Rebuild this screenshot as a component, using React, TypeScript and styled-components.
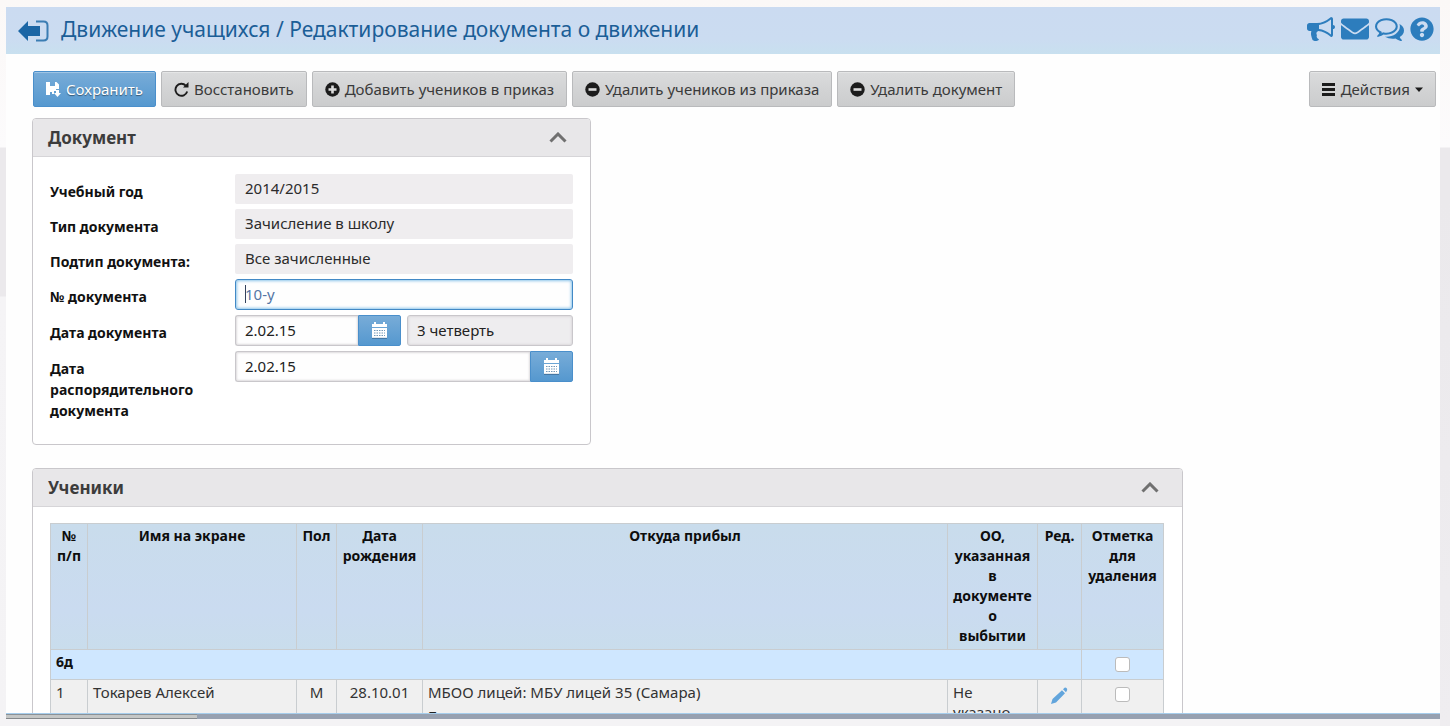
import React from "react";
import styled, { createGlobalStyle, css } from "styled-components";
import { FaEnvelope, FaQuestionCircle } from "react-icons/fa";

const GlobalStyle = createGlobalStyle`
  *, *::before, *::after { box-sizing: border-box; }
  body {
    margin: 0;
    background:
      linear-gradient(transparent 150px, #ebe9ec 200px, #efedf0 100%) right / 10px 100% no-repeat,
      linear-gradient(#fbf8f7 0, #fcfbfc 147px, #ebe9ec 148px, #ebe9ec 296px, #f5f4f6 297px, #f4f3f5 100%);
    font-family: "Noto Sans", "Open Sans", sans-serif;
    font-size: 15px;
    line-height: 20px;
    color: #222;
  }
  button, input { font: inherit; color: inherit; }
`;

const Frame = styled.div`
  height: 100vh;
  padding: 7px 10px 7px 6px;
  display: flex;
  flex-direction: column;
`;

const Header = styled.header`
  flex: none;
  height: 47px;
  padding: 0 6px 0 12px;
  display: flex;
  align-items: center;
  background: linear-gradient(#cbdbf1 0%, #cbdcf1 70%, #c8e0ef 100%);
  color: #1b5e97;
`;

const Title = styled.h1`
  flex: 1;
  margin: 0 0 4px 11px;
  font-size: 21px;
  line-height: 30px;
  font-weight: 400;
  white-space: nowrap;
`;

const BackLink = styled.a`
  display: flex;
  color: #1b66a5;
`;

const HeaderLinks = styled.nav`
  display: flex;
  align-items: center;
  gap: 6px;
  margin-bottom: 4px;
  a { display: flex; color: #2d7dbd; }
`;

const Content = styled.main`
  flex: 1;
  min-height: 0;
  overflow: hidden;
  background: #fefefe;
  padding: 17px 4px 0 26px;
`;

const Toolbar = styled.div`
  display: flex;
  gap: 5px;
  margin-bottom: 11px;
  padding-left: 1px;
`;

const blue = css`
  background: linear-gradient(#78acd8, #5598cf);
  border: 1px solid #4a8fcb;
  color: #fff;
`;

const ToolButton = styled.button<{ $primary?: boolean; $end?: boolean }>`
  height: 36px;
  padding: 0 12px;
  display: flex;
  align-items: center;
  gap: 5px;
  white-space: nowrap;
  border-radius: 2px;
  background: linear-gradient(#dadbdc, #cbcccd);
  border: 1px solid #b9babc;
  box-shadow: inset 0 1px 0 rgba(255, 255, 255, 0.3);
  color: #3a3a3a;
  ${(p) => p.$primary && blue}
  ${(p) => p.$primary && "text-shadow: 0 1px 1px rgba(0, 0, 0, 0.45);"}
  ${(p) => p.$end && "margin-left: auto;"}
  svg { color: ${(p) => (p.$primary ? "#fff" : "#1c1c1c")}; }
`;

const Panel = styled.section<{ $wide?: boolean }>`
  max-width: ${(p) => (p.$wide ? 1151 : 559)}px;
  margin-bottom: 23px;
  border: 1px solid #c9c7cb;
  border-radius: 4px;
  background: #fff;
`;

const PanelHead = styled.div`
  height: 38px;
  padding: 0 23px 0 15px;
  display: flex;
  align-items: center;
  justify-content: space-between;
  background: #e8e7e9;
  border-bottom: 1px solid #d6d5d8;
  border-radius: 3px 3px 0 0;
`;

const PanelTitle = styled.h2`
  margin: 0;
  font-size: 17px;
  line-height: 22px;
  font-weight: 700;
  color: #3c3c3c;
`;

const IconButton = styled.button`
  display: inline-flex;
  padding: 0;
  border: 0;
  background: none;
  color: #707070;
`;

const Form = styled.form`
  padding: 17px 17px 23px;
  display: grid;
  row-gap: 5px;
`;

const Row = styled.div`
  display: grid;
  grid-template-columns: 160px 1fr;
  column-gap: 25px;
  align-items: start;
`;

const Label = styled.label`
  height: 30px;
  padding-top: 7px;
  font-size: 14px;
  line-height: 21px;
  font-weight: 700;
  color: #111;
`;

const TallLabel = styled(Label)`
  height: auto;
`;

const Fields = styled.div<{ $split?: boolean }>`
  display: grid;
  grid-template-columns: ${(p) => (p.$split ? "1fr 1fr" : "1fr")};
  gap: 6px;
`;

const ReadOnly = styled.input`
  width: 100%;
  min-width: 0;
  height: 30px;
  padding: 0 10px 2px;
  border: 0;
  border-radius: 2px;
  background: #efedef;
  color: #2b2b2b;
  outline: none;
`;

const TextInput = styled.input<{ $active?: boolean; $muted?: boolean }>`
  flex: 1;
  width: 100%;
  min-width: 0;
  height: 31px;
  padding: 0 9px 2px;
  border: 1px solid #c9c7cb;
  border-radius: 3px;
  background: ${(p) => (p.$muted ? "#eeedef" : "#fefefe")};
  box-shadow: inset 0 0 2px 1px #dddbde;
  color: #222;
  outline: none;
  ${(p) =>
    p.$active &&
    css`
      border-color: #4289c6;
      box-shadow: inset 0 0 3px 1px #8cc4ea;
      color: #5576a5;
      background: linear-gradient(#33425c, #33425c) 9px 5px / 1px 18px no-repeat #fefefe;
    `}
`;

const DateGroup = styled.div`
  display: flex;
  min-width: 0;
  input { border-radius: 3px 0 0 3px; border-right: 0; }
`;

const DateButton = styled.button`
  flex: none;
  width: 43px;
  height: 31px;
  padding: 0;
  display: flex;
  align-items: center;
  justify-content: center;
  border-radius: 0 2px 2px 0;
  ${blue}
`;

const TableWrap = styled.div`
  padding: 16px 18px 0 17px;
`;

const Table = styled.table`
  width: 100%;
  table-layout: fixed;
  border-collapse: collapse;
  line-height: 20px;
  th, td {
    border: 1px solid #c9cdd0;
    vertical-align: top;
    text-align: left;
  }
`;

const HeadRow = styled.tr`
  background: linear-gradient(#c9dcec, #cadbf0 70%, #c9ddec);
  && th {
    padding: 2px 4px 3px;
    text-align: center;
    font-size: 14px;
    white-space: pre-line;
    color: #0d0d0d;
  }
`;

const GroupRow = styled.tr`
  height: 30px;
  background: #cfe7ff;
  th { padding: 2px 5px; color: #111; font-size: 14px; }
`;

const DataRow = styled.tr`
  background: #f0f0f0;
  color: #333;
`;

const Cell = styled.td<{ $center?: boolean }>`
  && {
    padding: ${(p) => (p.$center ? "2px 5px" : "2px 7px 2px 5px")};
    text-align: ${(p) => (p.$center ? "center" : "left")};
  }
`;

const Note = styled.b`
  display: block;
  margin-top: 4px;
  color: #222;
`;

const EditLink = styled.a`
  display: inline-flex;
  margin-top: 5px;
  color: #62a5dc;
`;

const Check = styled.input`
  appearance: none;
  display: inline-block;
  width: 15px;
  height: 15px;
  margin: 5px 0 0;
  border: 1px solid #bbb;
  border-radius: 3px;
  background: #fff;
`;

const ScrollStrip = styled.div`
  flex: none;
  height: 6px;
  display: flex;
  border-top: 1px solid #a6cdec;
  background: #97a1b1;
`;

const ScrollThumb = styled.div`
  width: 191px;
  background: #c5c7c6;
  border-top: 1px solid #8b9298;
  border-bottom: 1px solid #85898c;
`;

const BackIcon = () => (
  <svg width="32" height="22" viewBox="0 0 32 22" aria-hidden="true">
    <path d="M0 11 10 1v5h12v10H10v5z" fill="currentColor" />
    <path d="M18 1.500h7.500q4 0 4 4v11q0 4-4 4H18" fill="none" stroke="#3b7db3" strokeWidth="2" />
  </svg>
);

const BullhornIcon = () => (
  <svg width="28" height="28" viewBox="0 0 1792 1792" fill="currentColor" aria-hidden="true">
    <path
      transform="translate(0 1536) scale(1 -1)"
      d="M1664 896q53 0 90.500 -37.500t37.500 -90.500t-37.500 -90.500t-90.500 -37.500v-384q0 -52 -38 -90t-90 -38q-417 347 -812 380q-58 -19 -91 -66t-31 -100.500t40 -92.500q-20 -33 -23 -65.500t6 -58t33.500 -55t48 -50t61.500 -50.500q-29 -58 -111.500 -83t-168.500 -11.500t-132 55.500q-7 23 -29.500 87.500t-32 94.500t-23 89t-15 101t3.500 98.500t22 110.500h-122q-66 0 -113 47t-47 113v192q0 66 47 113t113 47h480q435 0 896 384q52 0 90 -38t38 -90v-384zM1536 292v954q-394 -302 -768 -343v-270q377 -42 768 -341z"
    />
  </svg>
);

const CommentsIcon = () => (
  <svg width="29" height="29" viewBox="0 0 1792 1792" fill="currentColor" aria-hidden="true">
    <path
      transform="translate(0 1536) scale(1 -1)"
      d="M704 1152q-153 0 -286 -52t-211.500 -141t-78.500 -191q0 -82 53 -158t149 -132l97 -56l-35 -84q34 20 62 39l44 31l53 -10q78 -14 153 -14q153 0 286 52t211.500 141t78.500 191t-78.500 191t-211.500 141t-286 52zM704 1280q191 0 353.500 -68.500t256.500 -186.500t94 -257t-94 -257t-256.500 -186.500t-353.500 -68.500q-86 0 -176 16q-124 -88 -278 -128q-36 -9 -86 -16h-3q-11 0 -20.500 8t-11.500 21q-1 3 -1 6.500t0.500 6.500t2 6l2.500 5t3.500 5.500t4 5t4.500 5t4 4.500q5 6 23 25t26 29.500t22.500 29t25 38.500t20.500 44q-124 72 -195 177t-71 224q0 139 94 257t256.500 186.500t353.500 68.500zM1526 111q10 -24 20.500 -44t25 -38.500t22.500 -29t26 -29.500t23 -25q1 -1 4 -4.500t4.500 -5t4 -5t3.500 -5.500l2.500 -5t2 -6t0.500 -6.500t-1 -6.500q-3 -14 -13 -22t-22 -7q-50 7 -86 16q-154 40 -278 128q-90 -16 -176 -16q-271 0 -472 132q58 -4 88 -4q161 0 309 45t264 129q125 92 192 212t67 254q0 77 -23 152q129 -71 204 -178t75 -230q0 -120 -71 -224.500t-195 -176.500z"
    />
  </svg>
);

const SaveIcon = () => (
  <svg width="15" height="15" viewBox="0 0 15 15" fill="currentColor" aria-hidden="true">
    <path fillRule="evenodd" d="M0 0h4v4h5V0h1.500L13 2.500V7h-3v2H8v3H6v-2H4v3H0zM10 8h3v3h2l-3.500 4L8 11h2z" />
  </svg>
);

const ReloadIcon = () => (
  <svg width="15" height="15" viewBox="0 0 15 15" aria-hidden="true">
    <path d="M11.800 3.600A6 6 0 1 0 13.200 9.500" fill="none" stroke="currentColor" strokeWidth="1.900" />
    <path d="M14.500 0v5.500H9z" fill="currentColor" />
  </svg>
);

const CircleIcon = ({ plus }: { plus?: boolean }) => (
  <svg width="15" height="15" viewBox="0 0 15 15" aria-hidden="true">
    <circle cx="7.500" cy="7.500" r="7.200" fill="currentColor" />
    <path d={plus ? "M3.500 7.500h8M7.500 3.500v8" : "M3.500 7.500h8"} stroke="#dcdcdc" strokeWidth="2.600" />
  </svg>
);

const MenuIcon = () => (
  <svg width="14" height="13" viewBox="0 0 14 13" aria-hidden="true">
    <path d="M0 1.500h13M0 6.500h13M0 11.500h13" stroke="currentColor" strokeWidth="2.800" />
  </svg>
);

const CaretIcon = () => (
  <svg width="8" height="5" viewBox="0 0 8 5" aria-hidden="true">
    <path d="M0 .500h8L4 5z" fill="currentColor" />
  </svg>
);

const ChevronIcon = () => (
  <svg width="18" height="12" viewBox="0 0 18 12" aria-hidden="true">
    <path d="M1.500 9.500 9 2l7.500 7.500" fill="none" stroke="currentColor" strokeWidth="3" />
  </svg>
);

const CalendarIcon = () => (
  <svg width="15" height="17" viewBox="0 0 15 17" aria-hidden="true">
    <path d="M0 2h2V0h2v2h7V0h2v2h2v3H0zM0 6h15v10H0z" fill="#fff" />
    <path d="M2 8.500h11M2 11h11M2 13.500h11" stroke="#7398b8" strokeWidth="1" strokeDasharray="1.500 1" />
    <path d="M0 16.300h15" stroke="#315a80" strokeWidth="0.700" />
  </svg>
);

const PencilIcon = () => (
  <svg width="17" height="17" viewBox="0 0 17 17" fill="currentColor" aria-hidden="true">
    <path d="m0 17 1.500-5L11 3.200l3 3L5 15.500zM12 2.300 13.500.8q1-.8 2 .2t.6 2.200L15 5.300z" />
  </svg>
);

function DateField({ id, value }: { id: string; value: string }) {
  return (
    <DateGroup>
      <TextInput id={id} defaultValue={value} />
      <DateButton type="button" aria-label="Выбрать дату">
        <CalendarIcon />
      </DateButton>
    </DateGroup>
  );
}

function PanelHeader({ title }: { title: string }) {
  return (
    <PanelHead>
      <PanelTitle>{title}</PanelTitle>
      <IconButton type="button" aria-label="Свернуть">
        <ChevronIcon />
      </IconButton>
    </PanelHead>
  );
}

const readOnlyFields = [
  { id: "year", label: "Учебный год", value: "2014/2015" },
  { id: "type", label: "Тип документа", value: "Зачисление в школу" },
  { id: "subtype", label: "Подтип документа:", value: "Все зачисленные" },
];

const columns = [
  { title: "№ п/п", width: 37 },
  { title: "Имя на экране", width: 209 },
  { title: "Пол", width: 40 },
  { title: "Дата рождения", width: 86 },
  { title: "Откуда прибыл" },
  { title: "ОО, указанная\nв\nдокументе\nо\nвыбытии", width: 90 },
  { title: "Ред.", width: 44 },
  { title: "Отметка для удаления", width: 82 },
];

export default function App() {
  return (
    <>
      <GlobalStyle />
      <Frame>
        <Header>
          <BackLink href="#" aria-label="Назад">
            <BackIcon />
          </BackLink>
          <Title>Движение учащихся / Редактирование документа о движении</Title>
          <HeaderLinks>
            <a href="#" aria-label="Объявления"><BullhornIcon /></a>
            <a href="#" aria-label="Почта"><FaEnvelope size={28} /></a>
            <a href="#" aria-label="Форум"><CommentsIcon /></a>
            <a href="#" aria-label="Справка"><FaQuestionCircle size={24} /></a>
          </HeaderLinks>
        </Header>
        <Content>
          <Toolbar>
            <ToolButton $primary><SaveIcon />Сохранить</ToolButton>
            <ToolButton><ReloadIcon />Восстановить</ToolButton>
            <ToolButton><CircleIcon plus />Добавить учеников в приказ</ToolButton>
            <ToolButton><CircleIcon />Удалить учеников из приказа</ToolButton>
            <ToolButton><CircleIcon />Удалить документ</ToolButton>
            <ToolButton $end><MenuIcon />Действия<CaretIcon /></ToolButton>
          </Toolbar>

          <Panel>
            <PanelHeader title="Документ" />
            <Form>
              {readOnlyFields.map((f) => (
                <Row key={f.id}>
                  <Label htmlFor={f.id}>{f.label}</Label>
                  <ReadOnly id={f.id} value={f.value} readOnly />
                </Row>
              ))}
              <Row>
                <Label htmlFor="number">№ документа</Label>
                <TextInput id="number" defaultValue="10-у" $active />
              </Row>
              <Row>
                <Label htmlFor="date">Дата документа</Label>
                <Fields $split>
                  <DateField id="date" value="2.02.15" />
                  <TextInput $muted readOnly value="3 четверть" aria-label="Учебный период" />
                </Fields>
              </Row>
              <Row>
                <TallLabel htmlFor="order">Дата распорядительного документа</TallLabel>
                <Fields>
                  <DateField id="order" value="2.02.15" />
                </Fields>
              </Row>
            </Form>
          </Panel>

          <Panel $wide>
            <PanelHeader title="Ученики" />
            <TableWrap>
              <Table>
                <colgroup>
                  {columns.map((c) => (
                    <col key={c.title} width={c.width} />
                  ))}
                </colgroup>
                <thead>
                  <HeadRow>
                    {columns.map((c) => (
                      <th key={c.title} scope="col">{c.title}</th>
                    ))}
                  </HeadRow>
                </thead>
                <tbody>
                  <GroupRow>
                    <th colSpan={7} scope="rowgroup">6д</th>
                    <Cell $center><Check type="checkbox" aria-label="Отметить класс 6д" /></Cell>
                  </GroupRow>
                  <DataRow>
                    <Cell>1</Cell>
                    <Cell>Токарев Алексей</Cell>
                    <Cell $center>М</Cell>
                    <Cell $center>28.10.01</Cell>
                    <Cell>МБОО лицей: МБУ лицей 35 (Самара)<Note>Г</Note></Cell>
                    <Cell>Не указано</Cell>
                    <Cell $center><EditLink href="#" aria-label="Редактировать"><PencilIcon /></EditLink></Cell>
                    <Cell $center><Check type="checkbox" aria-label="Отметить ученика" /></Cell>
                  </DataRow>
                </tbody>
              </Table>
            </TableWrap>
          </Panel>
        </Content>
        <ScrollStrip><ScrollThumb /></ScrollStrip>
      </Frame>
    </>
  );
}
